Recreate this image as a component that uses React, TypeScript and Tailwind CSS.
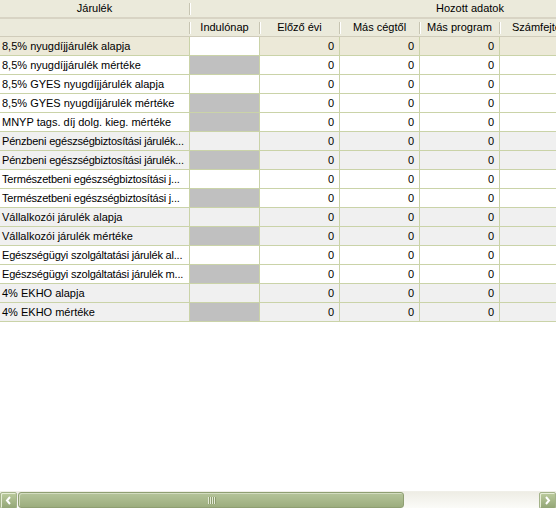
import React from 'react';

interface Row {
  label: string;
  shaded: boolean;
  locked: boolean;
  current?: boolean;
  tight?: boolean;
}

// labels that the grid shows clipped are written out as shown
const rows: Row[] = [
  { label: '8,5% nyugdíjjárulék alapja', shaded: false, locked: false, current: true },
  { label: '8,5% nyugdíjjárulék mértéke', shaded: false, locked: true },
  { label: '8,5% GYES nyugdíjjárulék alapja', shaded: false, locked: false },
  { label: '8,5% GYES nyugdíjjárulék mértéke', shaded: false, locked: true },
  { label: 'MNYP tags. díj dolg. kieg. mértéke', shaded: false, locked: true },
  { label: 'Pénzbeni egészségbiztosítási járulék...', shaded: true, locked: false, tight: true },
  { label: 'Pénzbeni egészségbiztosítási járulék...', shaded: true, locked: true, tight: true },
  { label: 'Természetbeni egészségbiztosítási j...', shaded: false, locked: false, tight: true },
  { label: 'Természetbeni egészségbiztosítási j...', shaded: false, locked: true, tight: true },
  { label: 'Vállalkozói járulék alapja', shaded: true, locked: false },
  { label: 'Vállalkozói járulék mértéke', shaded: true, locked: true },
  { label: 'Egészségügyi szolgáltatási járulék al...', shaded: false, locked: false, tight: true },
  { label: 'Egészségügyi szolgáltatási járulék m...', shaded: false, locked: true, tight: true },
  { label: '4% EKHO alapja', shaded: true, locked: false },
  { label: '4% EKHO mértéke', shaded: true, locked: true },
];

const subHeaders = [
  { title: 'Indulónap', w: 'w-[70px]' },
  { title: 'Előző évi', w: 'w-[80px]' },
  { title: 'Más cégtől', w: 'w-[80px]' },
  { title: 'Más program', w: 'w-[80px]' },
  { title: 'Számfejtett', w: 'w-[80px]' },
];

const HeaderCell: React.FC<{ title: string; className: string; divider?: boolean }> = ({
  title,
  className,
  divider = true,
}) => (
  <div className={`flex items-center shrink-0 ${className}`}>
    <span className="flex-1 text-center whitespace-nowrap">{title}</span>
    {divider && <div className="w-px h-[12px] bg-[#c7c5b2] shadow-[1px_0_0_#ffffff] shrink-0" />}
  </div>
);

const ScrollButton: React.FC<{ dir: 'left' | 'right' }> = ({ dir }) => (
  <div className="w-[17px] h-[17px] shrink-0 rounded-[2px] border border-[#a4b38a] bg-gradient-to-b from-[#bccb9e] to-[#93a676] flex items-center justify-center shadow-[inset_1px_1px_0_#e6edd6]">
    <svg width="7" height="9" viewBox="0 0 7 9">
      {dir === 'left' ? (
        <path d="M5 1 L2 4.5 L5 8" stroke="#ffffff" strokeWidth="2" fill="none" />
      ) : (
        <path d="M2 1 L5 4.5 L2 8" stroke="#ffffff" strokeWidth="2" fill="none" />
      )}
    </svg>
  </div>
);

export default function App() {
  return (
    <div
      className="w-[556px] h-[508px] bg-white flex flex-col overflow-hidden text-[11px] text-black"
      style={{ fontFamily: '"Liberation Sans", Arial, sans-serif' }}
    >
      <div className="flex-1 overflow-hidden">
        <div className="w-[556px] overflow-hidden">
          <div className="w-[760px]">
            {/* group header */}
            <div className="flex h-[19px] bg-[#ebeadb] border-b-2 border-[#d8d4c4]">
              <HeaderCell title="Járulék" className="w-[190px]" />
              <HeaderCell title="Hozott adatok" className="w-[560px]" divider={false} />
            </div>
            {/* column header */}
            <div className="flex h-[18px] bg-[#ebeadb] border-b border-[#d0ccba]">
              <HeaderCell title="" className="w-[190px]" />
              {subHeaders.map((h) => (
                <HeaderCell key={h.title} title={h.title} className={h.w} />
              ))}
            </div>
            {rows.map((r, idx) => {
              const bg = r.current ? 'bg-[#ece9d8]' : r.shaded ? 'bg-[#f0f0f0]' : 'bg-white';
              const first = r.locked ? 'bg-[#c0c0c0]' : r.current ? 'bg-white' : '';
              return (
                <div key={idx} className={`flex h-[19px] border-b border-[#cad3a8] ${bg}`}>
                  <div className="w-[190px] shrink-0 border-r border-[#cad3a8] pl-[2px] flex items-center">
                    <span className={`whitespace-nowrap ${r.tight ? 'tracking-[-0.2px]' : ''}`}>
                      {r.label}
                    </span>
                  </div>
                  <div className={`w-[70px] shrink-0 border-r border-[#cad3a8] ${first}`} />
                  {[0, 1, 2].map((i) => (
                    <div
                      key={i}
                      className="w-[80px] shrink-0 border-r border-[#cad3a8] flex items-center justify-end pr-[5px]"
                    >
                      0
                    </div>
                  ))}
                  <div className="w-[80px] shrink-0 border-r border-[#cad3a8]" />
                </div>
              );
            })}
          </div>
        </div>
      </div>
      {/* horizontal scrollbar */}
      <div className="h-[17px] flex items-stretch bg-gradient-to-b from-[#eeede5] to-[#fbfbf8] border-t border-[#f0efe8]">
        <ScrollButton dir="left" />
        <div className="w-[386px] shrink-0 ml-px rounded-[3px] border border-[#8f9f72] bg-gradient-to-b from-[#b5c49a] via-[#a9b98c] to-[#9cad7e] flex items-center justify-center shadow-[inset_1px_1px_0_#d3dcc0]">
          <div className="flex gap-px">
            {[0, 1, 2, 3].map((i) => (
              <div key={i} className="w-px h-[7px] bg-[#e4ebd6] shadow-[1px_0_0_#8b9b6e]" />
            ))}
          </div>
        </div>
        <div className="flex-1" />
        <ScrollButton dir="right" />
      </div>
    </div>
  );
}
